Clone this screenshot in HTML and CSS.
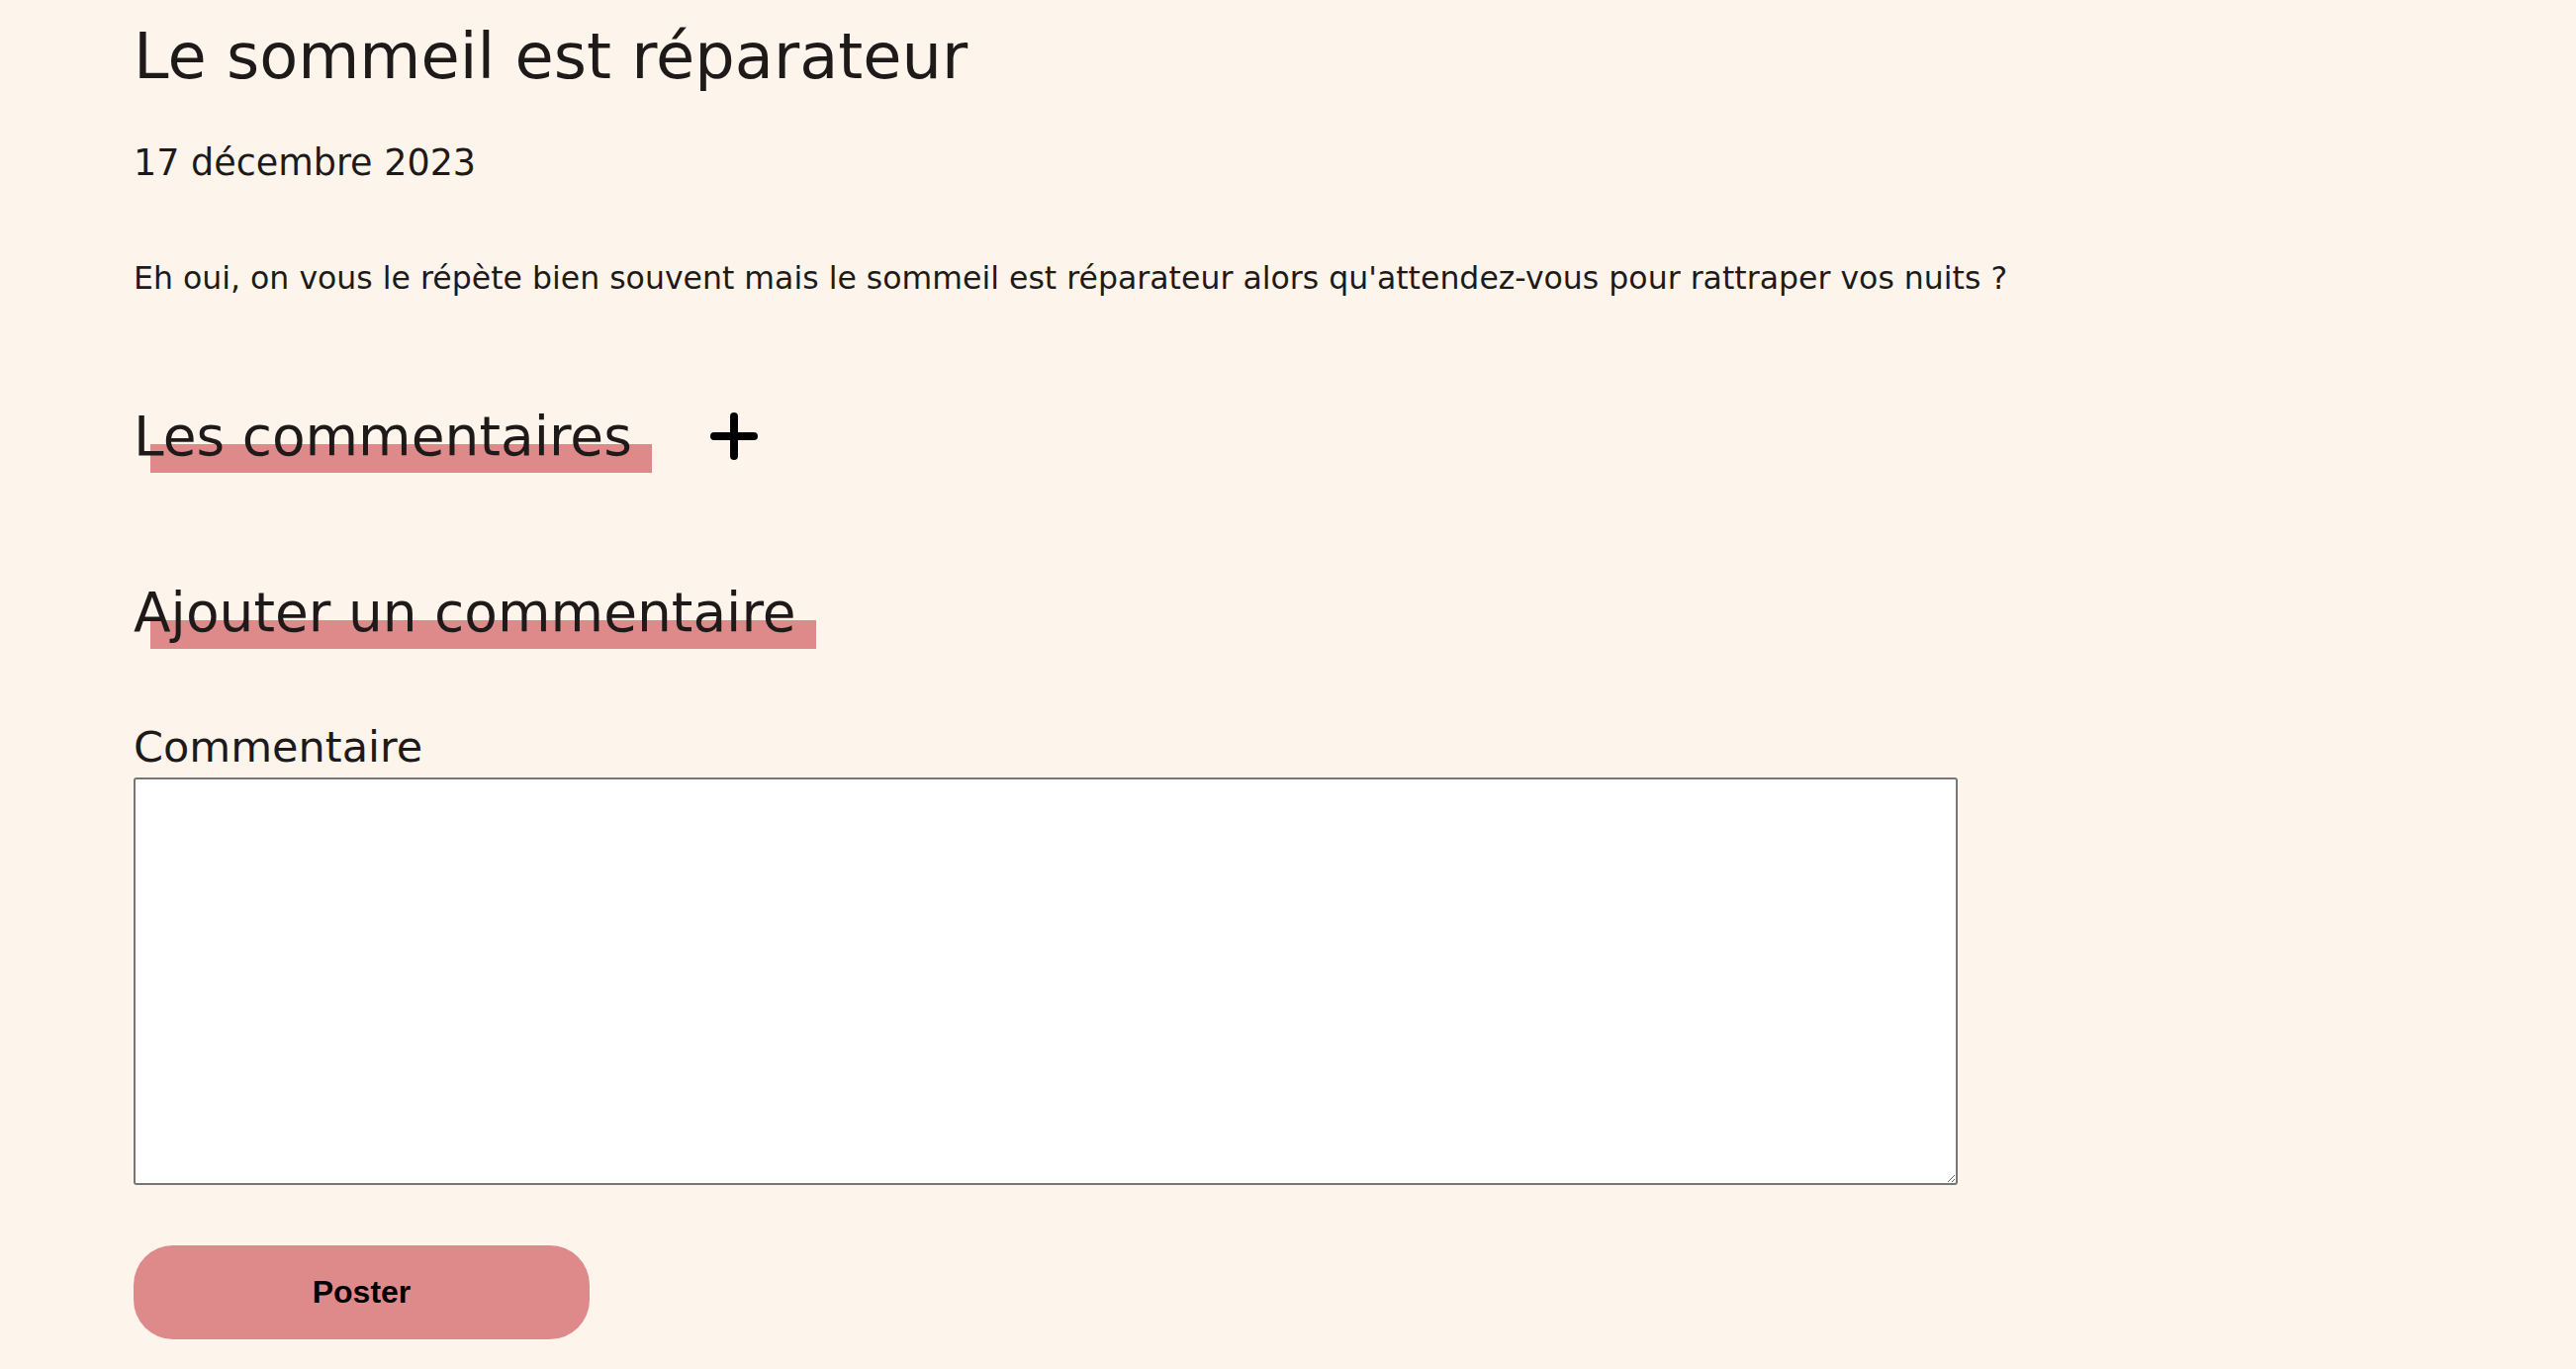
FILE: index.html
```html
<!DOCTYPE html>
<html lang="fr">
<head>
<meta charset="utf-8">
<title>Le sommeil est réparateur</title>
<link rel="stylesheet" href="styles.css">
</head>
<body>
<main class="article">
  <h1 class="article-title">Le sommeil est réparateur</h1>
  <p class="article-date">17 décembre 2023</p>
  <p class="article-intro">Eh oui, on vous le répète bien souvent mais le sommeil est réparateur alors qu'attendez-vous pour rattraper vos nuits ?</p>

  <section class="comments">
    <div class="comments-head">
      <h2 class="hl-title">Les commentaires</h2>
      <button class="toggle" type="button" aria-label="Afficher les commentaires">
        <svg width="48" height="48" viewBox="0 0 48 48" aria-hidden="true">
          <line x1="24" y1="4" x2="24" y2="44" stroke="#000" stroke-width="8" stroke-linecap="round"/>
          <line x1="4" y1="24" x2="44" y2="24" stroke="#000" stroke-width="8" stroke-linecap="round"/>
        </svg>
      </button>
    </div>
  </section>

  <section class="add-comment">
    <h2 class="hl-title hl-block">Ajouter un commentaire</h2>
    <form class="comment-form">
      <label class="field-label" for="commentaire">Commentaire</label>
      <textarea id="commentaire" class="field-area" name="commentaire"></textarea>
      <button class="submit" type="submit">Poster</button>
    </form>
  </section>
</main>
</body>
</html>
```

FILE: styles.css
```css
html, body {
  margin: 0;
  padding: 0;
}

body {
  background: #fdf5ec;
  color: #1f1a1a;
  font-family: "DejaVu Sans", "Liberation Sans", sans-serif;
}

.article {
  padding: 17px 135px 0;
}

.article-title {
  margin: 0;
  font-size: 63.8px;
  line-height: 80px;
  font-weight: 400;
}

.article-date {
  margin: 44px 0 0;
  font-size: 36.5px;
  line-height: 48px;
}

.article-intro {
  margin: 68px 0 0;
  font-size: 31.55px;
  line-height: 48px;
}

.comments {
  margin-top: 99px;
}

.comments-head {
  display: flex;
  align-items: center;
  gap: 59px;
}

.hl-title {
  margin: 0;
  font-size: 55px;
  line-height: 74px;
  font-weight: 400;
  padding-right: 20px;
  background-image: linear-gradient(#df8a8a, #df8a8a);
  background-repeat: no-repeat;
  background-position: 17px 100%;
  background-size: calc(100% - 17px) 29px;
}

.hl-block {
  width: fit-content;
}

.toggle {
  display: flex;
  padding: 0;
  margin: 0;
  border: 0;
  background: none;
  cursor: pointer;
}

.add-comment {
  margin-top: 104px;
}

.comment-form {
  margin: 0;
}

.field-label {
  display: block;
  margin: 74px 0 6px;
  font-size: 43px;
  line-height: 50px;
}

.field-area {
  display: block;
  box-sizing: border-box;
  width: 1844px;
  height: 412px;
  margin: 0;
  border: 2px solid #767676;
  border-radius: 3px;
  background: #fff;
}

.submit {
  display: block;
  margin-top: 61px;
  width: 461px;
  height: 95px;
  border: 0;
  border-radius: 40px;
  background: #df8a8a;
  color: #000;
  font-family: "Liberation Sans", Arial, sans-serif;
  font-weight: 700;
  font-size: 32px;
  cursor: pointer;
}
```
